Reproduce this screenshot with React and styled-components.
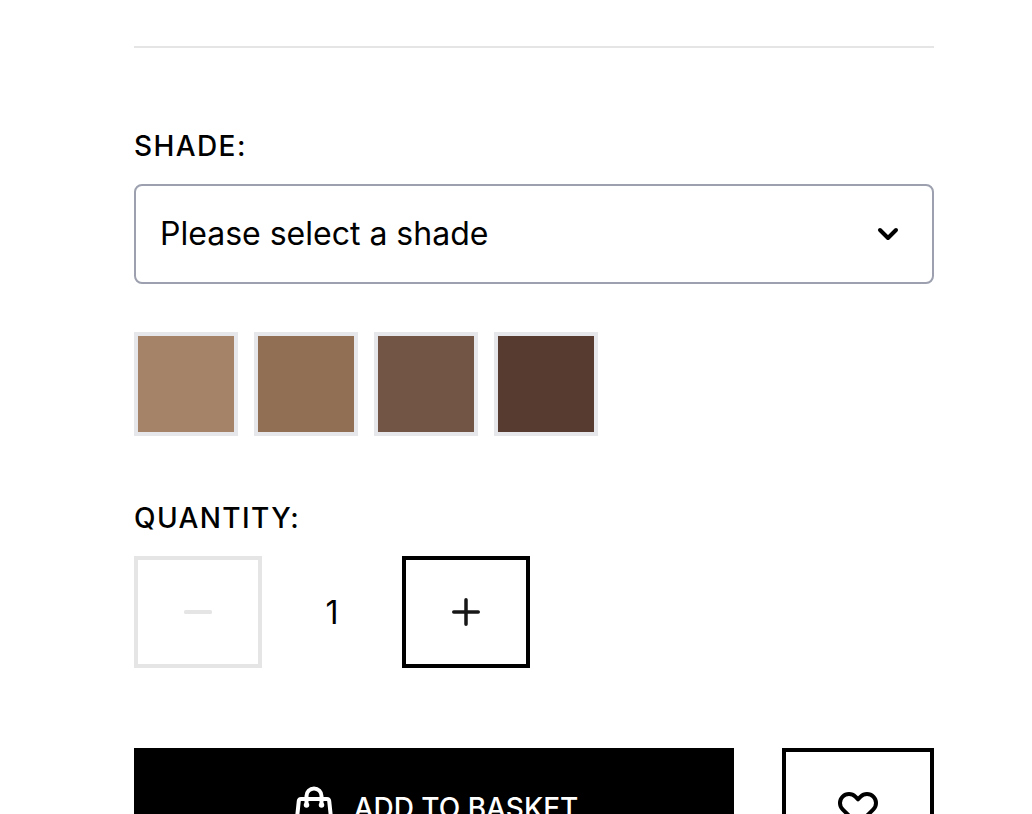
import React, { useState } from 'react';
import styled, { createGlobalStyle } from 'styled-components';

const GlobalStyle = createGlobalStyle`
  *, *::before, *::after { box-sizing: border-box; }
  body {
    margin: 0;
    background: #fff;
    color: #000;
    font-family: Inter, "Liberation Sans", sans-serif;
  }
  button, input, select { font: inherit; color: inherit; margin: 0; }
`;

const Page = styled.main`
  height: 100vh;
  overflow: hidden;
  padding: 46px 98px 0 134px;
`;

const Divider = styled.hr`
  margin: 0 0 78px;
  border: 0;
  border-top: 2px solid #e5e5e5;
`;

const Label = styled.label`
  display: block;
  margin-bottom: 18px;
  font-size: 28px;
  line-height: 40px;
  font-weight: 500;
  letter-spacing: 0.05em;
  text-transform: uppercase;
`;

const SelectBox = styled.div`
  display: grid;
  align-items: center;
  > * { grid-area: 1 / 1; }
  > svg {
    justify-self: end;
    margin-right: 28px;
    pointer-events: none;
  }
`;

const Select = styled.select`
  appearance: none;
  width: 100%;
  height: 100px;
  padding: 0 80px 0 24px;
  border: 2px solid #9ca0af;
  border-radius: 8px;
  background: #fff;
  font-size: 32px;
  line-height: 48px;
`;

const Swatches = styled.div`
  display: flex;
  flex-wrap: wrap;
  gap: 16px;
  margin: 48px 0 62px;
`;

const Swatch = styled.input`
  appearance: none;
  width: 104px;
  height: 104px;
  border: 4px solid #e5e7eb;
  background: ${(p) => p.$color};
  cursor: pointer;
  &:checked { border-color: #000; }
`;

const Stepper = styled.div`
  display: flex;
  margin-bottom: 80px;
`;

const OutlineButton = styled.button`
  display: flex;
  flex: none;
  align-items: center;
  justify-content: center;
  width: ${(p) => p.$width}px;
  height: ${(p) => p.$height}px;
  padding: 0;
  border: 4px solid #000;
  background: #fff;
  cursor: pointer;
  &:disabled {
    border-color: #e5e5e5;
    color: #e5e5e5;
    cursor: default;
  }
`;

const QuantityInput = styled.input`
  width: 140px;
  height: 112px;
  padding: 0;
  border: 0;
  background: transparent;
  font-size: 32px;
  line-height: 48px;
  text-align: center;
`;

const Actions = styled.div`
  display: flex;
  gap: 48px;
`;

const BasketButton = styled.button`
  display: flex;
  flex: 1;
  align-items: center;
  justify-content: center;
  gap: 16px;
  height: 120px;
  padding: 0;
  border: 0;
  background: #000;
  color: #fff;
  font-size: 28px;
  line-height: 40px;
  font-weight: 500;
  text-transform: uppercase;
  cursor: pointer;
`;

const Icon = ({ size = 48, stroke = 2, children }) => (
  <svg width={size} height={size} viewBox="0 0 24 24" fill="none" stroke="currentColor"
    strokeWidth={stroke} strokeLinecap="round" strokeLinejoin="round" aria-hidden="true">
    {children}
  </svg>
);

const shades = [
  { name: 'Light', color: '#a58369' },
  { name: 'Medium', color: '#916f55' },
  { name: 'Dark', color: '#735546' },
  { name: 'Deep', color: '#573b30' },
];

export default function App() {
  const [shade, setShade] = useState('');
  const [quantity, setQuantity] = useState(1);

  return (
    <>
      <GlobalStyle />
      <Page>
        <Divider />
        <Label htmlFor="shade">Shade:</Label>
        <SelectBox>
          <Select id="shade" value={shade} onChange={(e) => setShade(e.target.value)}>
            <option value="">Please select a shade</option>
            {shades.map((s) => <option key={s.name} value={s.name}>{s.name}</option>)}
          </Select>
          <svg width="36" height="36" viewBox="0 0 36 36" fill="none" stroke="#000"
            strokeWidth="4" strokeLinecap="round" strokeLinejoin="round" aria-hidden="true">
            <path d="M10 14l8 8 8-8" />
          </svg>
        </SelectBox>
        <Swatches role="radiogroup" aria-label="Shade">
          {shades.map((s) => (
            <Swatch key={s.name} type="radio" name="swatch" aria-label={s.name} $color={s.color}
              checked={shade === s.name} onChange={() => setShade(s.name)} />
          ))}
        </Swatches>
        <Label htmlFor="quantity">Quantity:</Label>
        <Stepper>
          <OutlineButton type="button" $width={128} $height={112} aria-label="Decrease quantity"
            disabled={quantity <= 1} onClick={() => setQuantity(quantity - 1)}>
            <svg width="28" height="28" viewBox="0 0 28 28" aria-hidden="true">
              <rect y="12" width="28" height="4" rx="1.5" fill="currentColor" />
            </svg>
          </OutlineButton>
          <QuantityInput id="quantity" type="text" inputMode="numeric" value={quantity}
            onChange={(e) => setQuantity(Number(e.target.value) || 1)} />
          <OutlineButton type="button" $width={128} $height={112} aria-label="Increase quantity"
            onClick={() => setQuantity(quantity + 1)}>
            <svg width="28" height="28" viewBox="0 0 28 28" fill="none" stroke="#171717"
              strokeWidth="3.5" strokeLinecap="round" aria-hidden="true">
              <path d="M14 1.75v24.5M1.75 14h24.5" />
            </svg>
          </OutlineButton>
        </Stepper>
        <Actions>
          <BasketButton type="button">
            <Icon>
              <path d="M15.75 10.5V6a3.75 3.75 0 1 0-7.5 0v4.5m11.356-1.993 1.263 12c.07.665-.45 1.243-1.119 1.243H4.25a1.125 1.125 0 0 1-1.12-1.243l1.264-12A1.125 1.125 0 0 1 5.513 7.5h12.974c.576 0 1.059.435 1.119 1.007ZM8.625 10.5a.375.375 0 1 1-.75 0 .375.375 0 0 1 .75 0Zm7.5 0a.375.375 0 1 1-.75 0 .375.375 0 0 1 .75 0Z" />
            </Icon>
            Add to basket
          </BasketButton>
          <OutlineButton type="button" $width={152} $height={120} aria-label="Add to wishlist">
            <Icon>
              <path d="M4.318 6.318a4.5 4.5 0 0 0 0 6.364L12 20.364l7.682-7.682a4.5 4.5 0 0 0-6.364-6.364L12 7.636l-1.318-1.318a4.5 4.5 0 0 0-6.364 0z" />
            </Icon>
          </OutlineButton>
        </Actions>
      </Page>
    </>
  );
}
